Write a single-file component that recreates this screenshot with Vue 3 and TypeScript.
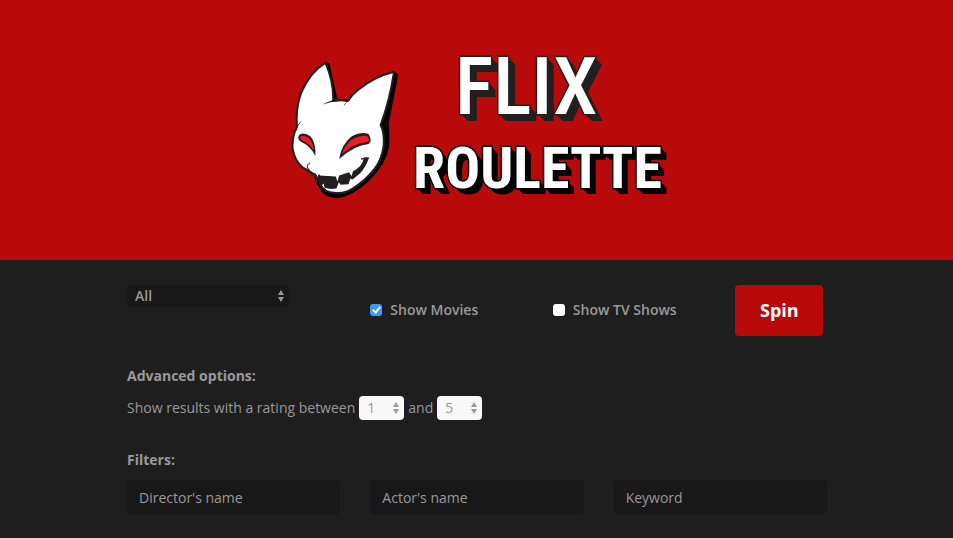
<script setup lang="ts">
import { ref } from 'vue'

const genre = ref('All')
const genres = ['All', 'Action', 'Comedy', 'Drama', 'Horror', 'Thriller']
const showMovies = ref(true)
const showTv = ref(false)
const minRating = ref(1)
const maxRating = ref(5)
const filters = ref([
  { id: 'director', label: "Director's name", value: '' },
  { id: 'actor', label: "Actor's name", value: '' },
  { id: 'keyword', label: 'Keyword', value: '' },
])
</script>

<template>
  <header class="hero">
    <svg class="cat" viewBox="35 32 323 412" aria-hidden="true">
      <path fill="#050505" d="M139 34 L150 39 L174 146 L207 148 L341 61 L356 72 L327 220 Q331 250 328 290 Q318 342 270 388 Q220 438 170 442 Q132 440 119 411 L105 382 L130 90 Z" />
      <path fill="#fff" stroke="#231f20" stroke-width="6" stroke-linejoin="round" d="M138 37 Q91 65 65 128 Q48 176 53 229 Q37 258 40 295 Q46 330 70 350 Q97 366 109 376 L113 393 L119 374 L124 402 Q134 423 164 426 Q195 430 218 414 Q259 389 286 353 Q307 326 312 285 Q315 246 303 223 Q330 151 343 64 Q284 79 237 117 Q217 132 205 151 Q181 145 161 151 Q163 94 138 37 Z" />
      <path fill="#fff" d="M150 158 L198 154 L194 175 L150 175 Z" />
      <path fill="#231f20" d="M129 162 Q165 141 207 148 Q200 156 192 168 Q196 158 202 153 Q164 149 129 162 Z M67 210 Q54 226 50 241 Q50 224 67 210 Z" />
      <path fill="#231f20" d="M108 316 Q93 285 62 272 Q51 260 62 251 Q76 244 93 257 Q110 276 108 316 Z M179 325 Q187 279 217 257 Q244 242 267 250 Q280 272 267 280 Q224 284 179 325 Z" />
      <path fill="#ed1c24" d="M103 300 Q92 279 65 267 Q58 258 68 256 Q82 254 93 268 Q102 280 103 300 Z M188 309 Q199 276 224 263 Q249 251 265 258 Q273 272 261 275 Q223 278 188 309 Z" />
      <path fill="none" stroke="#231f20" stroke-width="3" stroke-linecap="round" d="M91 337 Q78 344 87 355 Q95 367 107 369 Q120 387 121 400" />
      <path fill="#231f20" d="M119 374 L169 377 L174 392 L179 374 L209 364 L216 376 L220 362 Q249 346 252 325 Q260 319 268 322 Q259 349 242 367 L219 386 L213 383 L207 400 L183 402 L178 394 L171 413 Q151 416 136 411 L132 398 L126 405 Z" />
      <path fill="none" stroke="#231f20" stroke-width="4" stroke-linecap="round" d="M246 325 Q257 320 267 322" />
    </svg>
    <h1 class="wordmark">
      <span class="flix">FLIX</span>
      <span class="roulette">ROULETTE</span>
    </h1>
  </header>

  <form class="panel" @submit.prevent>
    <div class="grid">
      <div class="genre picker">
        <select v-model="genre" aria-label="Genre">
          <option v-for="g in genres" :key="g">{{ g }}</option>
        </select>
        <svg class="arrows" viewBox="0 0 8 14" aria-hidden="true"><path d="M4 1 7 6H1zM4 13 1 8h6z" /></svg>
      </div>
      <label class="check"><input v-model="showMovies" type="checkbox" /><span>Show Movies</span></label>
      <label class="check"><input v-model="showTv" type="checkbox" /><span>Show TV Shows</span></label>
      <button class="spin" type="submit">Spin</button>
    </div>

    <h2>Advanced options:</h2>
    <div class="rating">
      <span>Show results with a rating between</span>
      <div class="number picker">
        <select v-model="minRating" aria-label="Lowest rating">
          <option v-for="n in 5" :key="n" :value="n">{{ n }}</option>
        </select>
        <svg class="arrows" viewBox="0 0 8 14" aria-hidden="true"><path d="M4 1 7 6H1zM4 13 1 8h6z" /></svg>
      </div>
      <span>and</span>
      <div class="number picker">
        <select v-model="maxRating" aria-label="Highest rating">
          <option v-for="n in 5" :key="n" :value="n">{{ n }}</option>
        </select>
        <svg class="arrows" viewBox="0 0 8 14" aria-hidden="true"><path d="M4 1 7 6H1zM4 13 1 8h6z" /></svg>
      </div>
    </div>

    <h2>Filters:</h2>
    <div class="filters">
      <input v-for="f in filters" :id="f.id" :key="f.id" v-model="f.value" type="text" :placeholder="f.label" :aria-label="f.label" />
    </div>
  </form>
</template>

<style>
body {
  margin: 0;
  background: #1e1e1e;
}
</style>

<style scoped>
.hero,
.panel,
.panel select,
.panel input,
.panel button {
  box-sizing: border-box;
  font-family: 'Open Sans', 'Noto Sans', sans-serif;
}
.hero {
  display: flex;
  align-items: center;
  justify-content: center;
  gap: 14px;
  min-height: 260px;
  background: #b8090b;
}
.cat {
  display: block;
  width: 108px;
  height: 138px;
}
.wordmark {
  display: flex;
  flex-direction: column;
  gap: 9px;
  margin: 0 0 10px;
  color: #fff;
  font-family: 'Roboto Condensed', 'Open Sans Condensed', 'Liberation Sans Narrow', 'Liberation Sans', sans-serif;
  font-weight: 700;
  -webkit-text-stroke: 3px #231f20;
  paint-order: stroke fill;
}
.flix {
  padding-left: 42px;
  font-size: 80px;
  font-weight: 500;
  line-height: 76px;
  text-shadow: 1px 1px #231f20, 2px 2px #231f20, 3px 3px #231f20, 4px 4px #231f20, 5px 5px #231f20, 6px 6px #231f20, 7px 7px #231f20;
}
.roulette {
  font-size: 58px;
  line-height: 68px;
  -webkit-text-stroke-color: #050505;
  text-shadow: 1px 1px #050505, 2px 2px #050505, 3px 3px #050505, 4px 4px #050505, 5px 5px #050505, 6px 6px #050505;
}
.panel {
  max-width: 739px;
  margin: 0 auto;
  padding: 25px 19px 24px 20px;
  color: #999;
  font-size: 14px;
  line-height: 20px;
}
.grid {
  display: grid;
  grid-template-columns: repeat(12, minmax(0, 1fr));
  column-gap: 30px;
  align-items: start;
}
.picker {
  position: relative;
}
.picker select {
  appearance: none;
  display: block;
  width: 100%;
  margin: 0;
  padding: 0 8px 2px;
  border: 0;
  border-radius: 4px;
  color: #999;
  font-size: 14px;
}
.arrows {
  position: absolute;
  top: 0;
  bottom: 0;
  right: 4px;
  width: 8px;
  height: 14px;
  margin: auto 0;
  fill: #999;
  pointer-events: none;
}
.genre {
  grid-column: span 4;
  width: 162px;
}
.genre select {
  height: 22px;
  background: #181818;
  font-weight: 600;
}
.check {
  grid-column: span 3;
  display: flex;
  align-items: center;
  gap: 8px;
  height: 50px;
  font-weight: 600;
}
.check input {
  appearance: none;
  width: 12px;
  height: 12px;
  margin: 0;
  border-radius: 3px;
  background: #fff;
}
.check input:checked {
  background: #3b99fc;
}
.check input:checked::after {
  content: '';
  display: block;
  box-sizing: border-box;
  width: 5px;
  height: 8px;
  margin: 1px 0 0 4px;
  border: solid #fff;
  border-width: 0 2px 2px 0;
  transform: rotate(40deg);
}
.spin {
  grid-column: span 2;
  width: 88px;
  height: 51px;
  padding: 0 0 2px;
  border: 0;
  border-radius: 4px;
  background: #b8090b;
  color: #fff;
  font-size: 18px;
  font-weight: 700;
}
h2 {
  margin: 30px 0 10px;
  font-size: 14px;
  font-weight: 700;
  line-height: 20px;
}
.rating {
  display: flex;
  flex-wrap: wrap;
  align-items: center;
  gap: 4px;
}
.number {
  width: 45px;
}
.number select {
  height: 24px;
  background: #f8f8f8;
}
.filters {
  display: grid;
  grid-template-columns: repeat(3, minmax(0, 1fr));
  gap: 30px;
}
.filters input {
  width: 100%;
  height: 34px;
  padding: 0 12px;
  border: 0;
  border-radius: 4px;
  background: #181818;
  color: #999;
  font-size: 14px;
}
.filters input::placeholder {
  color: #999;
  opacity: 1;
}
</style>
